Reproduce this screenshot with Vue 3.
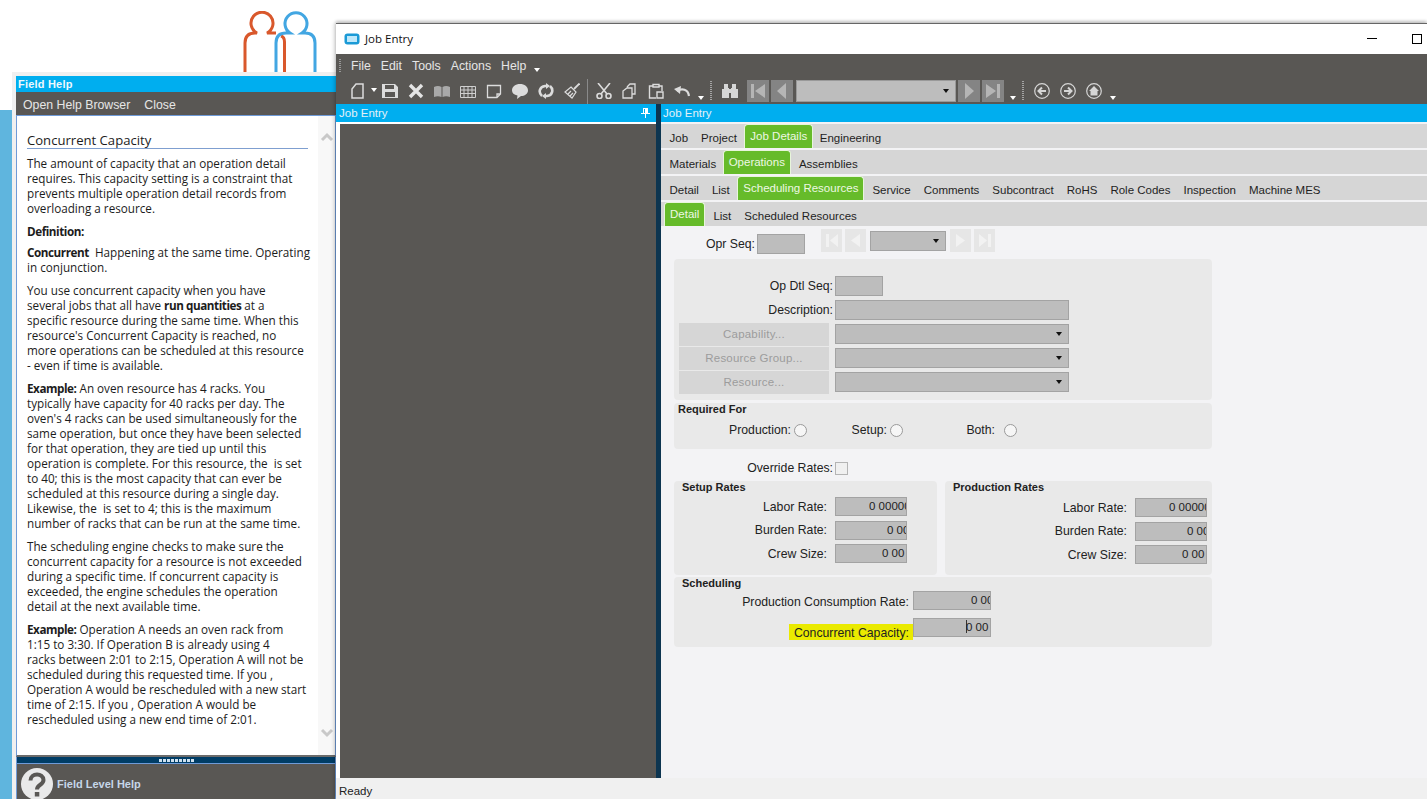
<script setup>
// tab rows, the active one is drawn green
const tabRows = [
  { id: 1, tabs: ['Job', 'Project', 'Job Details', 'Engineering'], active: 'Job Details' },
  { id: 2, tabs: ['Materials', 'Operations', 'Assemblies'], active: 'Operations' },
  { id: 3, tabs: ['Detail', 'List', 'Scheduling Resources', 'Service', 'Comments', 'Subcontract', 'RoHS', 'Role Codes', 'Inspection', 'Machine MES'], active: 'Scheduling Resources' },
  { id: 4, tabs: ['Detail', 'List', 'Scheduled Resources'], active: 'Detail' }
]

const menus = ['File', 'Edit', 'Tools', 'Actions', 'Help']
const lookups = ['Capability...', 'Resource Group...', 'Resource...']
const rates = [
  { label: 'Labor Rate:', value: '0 00000', cls: 'v-long' },
  { label: 'Burden Rate:', value: '0 00', cls: 'v-clip' },
  { label: 'Crew Size:', value: '0 00', cls: 'v-end' }
]
const radios = [
  { label: 'Production:', cls: 'r-prod' },
  { label: 'Setup:', cls: 'r-setup' },
  { label: 'Both:', cls: 'r-both' }
]
</script>

<template>
  <div class="desktop">
    <div class="strip"></div>

    <svg class="logo" width="80" height="70" viewBox="0 0 80 70" fill="none" stroke-width="3">
      <g stroke="#d9582c">
        <path d="M2 62V32Q2 22 12 22H14A11 11 0 1 1 24 22H33" />
        <path d="M38 25Q41.500 26 41.500 31V62" />
      </g>
      <g stroke="#42a6e2">
        <path d="M33 62V32Q33 22 43 22H47A11 11 0 1 1 59 22H62Q72 22 72 32V62" />
      </g>
    </svg>

    <!-- finestra field help -->
    <section class="help">
      <div class="help-title">Field Help</div>
      <div class="help-menu"><span>Open Help Browser</span><span>Close</span></div>
      <div class="help-content">
        <div class="help-text">
          <h4>Concurrent Capacity</h4>
          <p>The amount of capacity that an operation detail<br>requires. This capacity setting is a constraint that<br>prevents multiple operation detail records from<br>overloading a resource.</p>
          <p class="def"><b>Definition:</b></p>
          <p><b>Concurrent</b>&nbsp; Happening at the same time. Operating<br>in conjunction.</p>
          <p>You use concurrent capacity when you have<br>several jobs that all have <b>run quantities</b> at a<br>specific resource during the same time. When this<br>resource's Concurrent Capacity is reached, no<br>more operations can be scheduled at this resource<br>- even if time is available.</p>
          <p><b>Example:</b> An oven resource has 4 racks. You<br>typically have capacity for 40 racks per day. The<br>oven's 4 racks can be used simultaneously for the<br>same operation, but once they have been selected<br>for that operation, they are tied up until this<br>operation is complete. For this resource, the&nbsp; is set<br>to 40; this is the most capacity that can ever be<br>scheduled at this resource during a single day.<br>Likewise, the&nbsp; is set to 4; this is the maximum<br>number of racks that can be run at the same time.</p>
          <p>The scheduling engine checks to make sure the<br>concurrent capacity for a resource is not exceeded<br>during a specific time. If concurrent capacity is<br>exceeded, the engine schedules the operation<br>detail at the next available time.</p>
          <p><b>Example:</b> Operation A needs an oven rack from<br>1:15 to 3:30. If Operation B is already using 4<br>racks between 2:01 to 2:15, Operation A will not be<br>scheduled during this requested time. If you ,<br>Operation A would be rescheduled with a new start<br>time of 2:15. If you , Operation A would be<br>rescheduled using a new end time of 2:01.</p>
        </div>
        <div class="help-scroll">
          <svg width="14" height="10" viewBox="0 0 14 10" fill="none" stroke="#c9c9c9" stroke-width="3"><path d="M2 8L7 3L12 8" /></svg>
          <svg width="14" height="10" viewBox="0 0 14 10" fill="none" stroke="#c9c9c9" stroke-width="3"><path d="M2 2L7 7L12 2" /></svg>
        </div>
      </div>
      <div class="help-split"><i v-for="n in 9" :key="n"></i></div>
      <div class="help-foot">
        <svg width="34" height="34" viewBox="0 0 34 34">
          <circle cx="17" cy="17" r="16" fill="#e9e9e9" />
          <path d="M10.500 13.500C10.500 5.500 23.500 5.500 23.500 13C23.500 18 17 17.500 17 22.500" fill="none" stroke="#595754" stroke-width="4" />
          <rect x="14.800" y="25" width="4.500" height="4.500" fill="#595754" />
        </svg>
        <span>Field Level Help</span>
      </div>
    </section>

    <!-- finestra principale -->
    <section class="job">
      <header class="job-title">
        <svg width="16" height="12" viewBox="0 0 16 12">
          <rect x="0.500" y="0.500" width="15" height="11" rx="3" fill="#1b9ad6" />
          <rect x="3" y="3" width="10" height="6" fill="#bfe8fa" />
        </svg>
        <span class="job-name">Job Entry</span>
        <span class="win-min"></span>
        <span class="win-max"></span>
      </header>

      <div class="bars">
        <nav class="menu-bar">
          <span class="grip"></span>
          <span v-for="m in menus" :key="m" class="menu-item">{{ m }}</span>
          <span class="tri menu-tri"></span>
        </nav>
        <div class="tool-bar">
          <div class="tools first-tools">
            <svg class="ic" viewBox="0 0 16 16" fill="none" stroke="#dcdcdc" stroke-width="1.500"><path d="M2 6L6 1H13V15H2Z" /></svg>
            <span class="tri new-tri"></span>
            <svg class="ic" viewBox="0 0 16 16" fill="#dcdcdc"><path d="M0 1H13L16 4V15H0ZM3 2V6H12V2ZM3 9V14H13V9Z" /></svg>
            <svg class="ic" viewBox="0 0 16 16" fill="none" stroke="#e4e4e4" stroke-width="3.400"><path d="M2 2L14 14M14 2L2 14" /></svg>
            <svg class="ic" viewBox="0 0 16 16" fill="#a9a9a9"><path d="M0 4Q4 2 7.500 4V14Q4 12.500 0 14ZM8.500 4Q12 2 16 4V14Q12 12.500 8.500 14Z" /></svg>
            <svg class="ic" viewBox="0 0 16 16" fill="none" stroke="#cfcfcf"><path d="M.500 3.500H15.500V14.500H.500ZM.500 7H15.500M.500 10.500H15.500M4 3.500V14.500M8 3.500V14.500M12 3.500V14.500" /></svg>
            <svg class="ic" viewBox="0 0 16 16" fill="none" stroke="#dcdcdc" stroke-width="1.300"><path d="M1.500 2.500H14.500V11L11 14.500H1.500ZM14 11H11V14" /></svg>
            <svg class="ic" viewBox="0 0 16 16" fill="#dcdcdc"><path d="M8 1C12.500 1 16 3.500 16 7.500C16 11 12.500 13 9 13L5 16L5.500 12.500C2 12 0 10 0 7.500C0 3.500 3.500 1 8 1Z" /></svg>
            <svg class="ic" viewBox="0 0 16 16" fill="none" stroke="#dcdcdc" stroke-width="2.600"><path d="M4 13C0 9.500 1.500 3.500 7 3H9M12 3C16 6.500 14.500 12.500 9 13H7" /><path d="M8 0V6L12 3ZM8 10V16L4 13Z" fill="#dcdcdc" stroke="none" /></svg>
            <svg class="ic" viewBox="0 0 16 16" fill="none" stroke="#dcdcdc" stroke-width="1.200"><path d="M10 6L15.500 .500" stroke-width="1.800" /><path d="M7 4L12 9L8 15L1 9Z" /><path d="M4 11L7 8M6 13L9 10" /></svg>
            <span class="sep"></span>
            <svg class="ic" viewBox="0 0 16 16" fill="none" stroke="#dcdcdc" stroke-width="1.600"><path d="M2 0L11 11M14 0L5 11" /><circle cx="3.500" cy="13" r="2.500" /><circle cx="12.500" cy="13" r="2.500" /></svg>
            <svg class="ic" viewBox="0 0 16 16" fill="none" stroke="#dcdcdc" stroke-width="1.300"><path d="M5 4L8 1H13V11H10M1 8L5 5H10V15H1Z" /></svg>
            <svg class="ic" viewBox="0 0 16 16" fill="none" stroke="#dcdcdc" stroke-width="1.400"><path d="M5 3H1.500V15H8M11 3H14V8M5 4V1.500H11V4ZM9 9H15V15H9Z" /></svg>
            <svg class="ic" viewBox="0 0 16 16" fill="none" stroke="#dcdcdc" stroke-width="2.200"><path d="M15 13C14 6 8 5 3 8" /><path d="M0 6L7 3L6 11Z" fill="#dcdcdc" stroke="none" /></svg>
            <span class="tri undo-tri"></span>
            <span class="grip-v"></span>
            <svg class="ic" viewBox="0 0 16 16" fill="#d6d6d6"><path d="M2 1H6V5H7V15H0V6H2ZM10 1H14V6H16V15H9V5H10ZM7 6H9V10H7Z" /></svg>
          </div>

          <div class="rec-nav">
            <span class="nav-btn"><svg width="14" height="16" viewBox="0 0 14 16" fill="#b5b5b5"><path d="M0 1H3V15H0ZM14 1V15L4 8Z" /></svg></span>
            <span class="nav-btn"><svg width="10" height="16" viewBox="0 0 10 16" fill="#b5b5b5"><path d="M9 0V16L0 8Z" /></svg></span>
            <span class="nav-combo"><span class="tri dark"></span></span>
            <span class="nav-btn"><svg width="10" height="16" viewBox="0 0 10 16" fill="#b5b5b5"><path d="M1 0V16L10 8Z" /></svg></span>
            <span class="nav-btn"><svg width="14" height="16" viewBox="0 0 14 16" fill="#b5b5b5"><path d="M14 1H11V15H14ZM0 1V15L10 8Z" /></svg></span>
          </div>
          <span class="tri nav-tri"></span>
          <span class="grip-v nav-grip"></span>

          <div class="arrows">
            <svg class="ic" viewBox="0 0 16 16" fill="none" stroke="#d6d6d6" stroke-width="1.200"><circle cx="8" cy="8" r="7.300" /><path d="M12 8H5M8 4.500L4.500 8L8 11.500" stroke-width="2" /></svg>
            <svg class="ic" viewBox="0 0 16 16" fill="none" stroke="#d6d6d6" stroke-width="1.200"><circle cx="8" cy="8" r="7.300" /><path d="M4 8H11M8 4.500L11.500 8L8 11.500" stroke-width="2" /></svg>
            <svg class="ic" viewBox="0 0 16 16" fill="none" stroke="#d6d6d6" stroke-width="1.200"><circle cx="8" cy="8" r="7.300" /><path d="M8 3L13 8H11.500V12.500H4.500V8H3Z" fill="#d6d6d6" stroke="none" /></svg>
          </div>
          <span class="tri end-tri"></span>
        </div>
      </div>

      <div class="job-main">
        <div class="dock-left">
          <div class="dock-head">
            <span>Job Entry</span>
            <svg width="9" height="10" viewBox="0 0 9 10" fill="#fff"><path d="M2 0H7V5H9V6H5V10H4V6H0V5H2ZM3 1V5H4V1Z" /></svg>
          </div>
          <div class="dock-body"></div>
        </div>
        <div class="dock-split"></div>

        <div class="dock-right">
          <div class="dock-head"><span>Job Entry</span></div>
          <div class="tab-rows">
            <div v-for="row in tabRows" :key="row.id" class="tab-row" :class="'tab-row-' + row.id">
              <span v-for="t in row.tabs" :key="t" class="tab" :class="{ on: t === row.active }">{{ t }}</span>
            </div>
          </div>

          <div class="form">
            <div class="opr-row">
              <label class="lbl">Opr Seq:</label>
              <span class="fld opr-fld"></span>
              <div class="opr-nav">
                <span class="mini"><svg width="12" height="13" viewBox="0 0 12 13" fill="#f2f2f2"><path d="M0 0H3V13H0ZM12 0V13L4 6.500Z" /></svg></span>
                <span class="mini"><svg width="9" height="13" viewBox="0 0 9 13" fill="#f2f2f2"><path d="M9 0V13L0 6.500Z" /></svg></span>
                <span class="fld combo opr-combo"><span class="tri dark"></span></span>
                <span class="mini"><svg width="9" height="13" viewBox="0 0 9 13" fill="#f2f2f2"><path d="M0 0V13L9 6.500Z" /></svg></span>
                <span class="mini"><svg width="12" height="13" viewBox="0 0 12 13" fill="#f2f2f2"><path d="M12 0H9V13H12ZM0 0V13L8 6.500Z" /></svg></span>
              </div>
            </div>

            <div class="panel detail-panel">
              <label class="lbl end">Op Dtl Seq:</label>
              <span class="fld short"></span>
              <label class="lbl end">Description:</label>
              <span class="fld"></span>
              <template v-for="l in lookups" :key="l">
                <span class="lookup">{{ l }}</span>
                <span class="fld combo"><span class="tri dark"></span></span>
              </template>
            </div>

            <div class="panel req-panel">
              <h5>Required For</h5>
              <div class="radio-row">
                <div v-for="r in radios" :key="r.label" class="radio-field" :class="r.cls">
                  <label class="lbl">{{ r.label }}</label><i class="radio"></i>
                </div>
              </div>
            </div>

            <div class="override">
              <label class="lbl">Override Rates:</label><i class="check"></i>
            </div>

            <div class="rate-panels">
              <div class="panel rates setup">
                <h5>Setup Rates</h5>
                <div v-for="r in rates" :key="r.label" class="rate-row">
                  <label class="lbl">{{ r.label }}</label>
                  <span class="fld val" :class="r.cls">{{ r.value }}</span>
                </div>
              </div>
              <div class="panel rates prod">
                <h5>Production Rates</h5>
                <div v-for="r in rates" :key="r.label" class="rate-row">
                  <label class="lbl">{{ r.label }}</label>
                  <span class="fld val" :class="r.cls">{{ r.value }}</span>
                </div>
              </div>
            </div>

            <div class="panel sched">
              <h5>Scheduling</h5>
              <div class="sched-row">
                <label class="lbl">Production Consumption Rate:</label>
                <span class="fld val v-sched">0 00</span>
              </div>
              <div class="sched-row second">
                <label class="lbl hilite">Concurrent Capacity:</label>
                <span class="fld val v-cur"><i class="caret"></i>0 00</span>
              </div>
            </div>
          </div>
        </div>
      </div>

      <footer class="status">Ready</footer>
    </section>
  </div>
</template>

<style scoped>
.desktop {
  position: relative;
  width: 1427px;
  height: 799px;
  overflow: hidden;
  background: #fff;
  font-family: "Liberation Sans", Arial, sans-serif;
  font-size: 12px;
  color: #222;
}

.strip {
  position: absolute;
  left: 0;
  top: 110px;
  width: 16px;
  bottom: 0;
  background: #5fb5de;
}

.logo {
  position: absolute;
  left: 243px;
  top: 11px;
}

/* ---- field help ---- */
.help {
  position: absolute;
  left: 12px;
  top: 72px;
  width: 324px;
  height: 727px;
  box-sizing: border-box;
  padding: 4px 0 0 4px;
  background: #f0f0f0;
  display: flex;
  flex-direction: column;
}

.help-title {
  flex: none;
  height: 16px;
  line-height: 17px;
  padding-left: 2px;
  background: #00aeef;
  color: #eef8fd;
  font-size: 11px;
  font-weight: bold;
  letter-spacing: .2px;
}

.help-menu {
  flex: none;
  height: 23px;
  line-height: 26px;
  padding-left: 7px;
  background: #595754;
  color: #e6e6e6;
  display: flex;
  gap: 14px;
  font-size: 12.300px;
}

.help-content {
  flex: 1;
  min-height: 0;
  display: flex;
  background: #fff;
  border: 1px solid #6f9bd8;
  border-bottom: 2px solid #6b6b6b;
}

.help-text {
  flex: 1;
  overflow: hidden;
  padding: 15px 0 0 10px;
  font-family: "Open Sans", "Noto Sans", sans-serif;
  font-size: 11.700px;
  line-height: 15px;
  color: #1c1c1c;
  white-space: nowrap;
}

.help-text b {
  letter-spacing: -.45px;
}

.help-text h4 {
  margin: 0 10px 7px 0;
  padding-bottom: 1px;
  height: 16px;
  font-size: 13.100px;
  line-height: 18px;
  font-weight: normal;
  border-bottom: 1px solid #7f9fd0;
}

.help-text p {
  margin: 0 0 8px;
}

.help-text p.def {
  margin-bottom: 6px;
}

.help-scroll {
  flex: none;
  width: 17px;
  background: #f8f8f8;
  display: flex;
  flex-direction: column;
  justify-content: space-between;
  align-items: center;
  padding: 16px 0 17px;
  box-sizing: border-box;
}

.help-split {
  flex: none;
  height: 6px;
  background: #003d66;
  border-right: 1px solid #6f9bd8;
  border-left: 1px solid #6f9bd8;
  display: flex;
  justify-content: center;
  align-items: center;
  gap: 1px;
}

.help-split i {
  width: 3px;
  height: 3px;
  background: #cfe0ee;
}

.help-foot {
  flex: none;
  height: 36px;
  box-sizing: border-box;
  display: flex;
  align-items: center;
  gap: 3px;
  padding: 4px 0 0 3px;
  background: #595754;
  border: 1px solid #6f9bd8;
  border-bottom: 0;
  color: #c6d6e8;
  font-size: 11px;
  font-weight: bold;
}

.help-foot svg {
  flex: none;
}

/* ---- job entry ---- */
.job {
  position: absolute;
  left: 336px;
  top: 23px;
  right: 0;
  bottom: 0;
  display: flex;
  flex-direction: column;
  background: #fff;
  border-top: 1px solid #666;
  box-shadow: 0 -2px 3px rgba(0, 0, 0, .2), -2px 0 4px rgba(0, 0, 0, .15);
}

.job-title {
  height: 30px;
  box-sizing: border-box;
  padding-bottom: 1px;
  flex: none;
  display: flex;
  align-items: center;
  padding-left: 8px;
}

.job-name {
  margin-left: 5px;
  font-family: "Open Sans", sans-serif;
  font-size: 11.500px;
  color: #111;
}

.win-min {
  margin-left: auto;
  width: 10px;
  height: 1px;
  background: #000;
}

.win-max {
  margin: 0 5px 0 35px;
  width: 8px;
  height: 8px;
  border: 1px solid #000;
}

.bars {
  flex: none;
  height: 50px;
  background: #595754;
  color: #e6e6e6;
}

.menu-bar {
  height: 24px;
  display: flex;
  align-items: center;
  padding-left: 3px;
  font-size: 12.300px;
}

.grip {
  width: 2px;
  height: 14px;
  margin-right: 10px;
  background: repeating-linear-gradient(#999 0 1px, transparent 1px 2px);
}

.menu-item {
  margin-right: 10px;
}

.menu-tri {
  align-self: flex-end;
  margin: 0 0 6px -2px;
}

.tri {
  display: inline-block;
  width: 0;
  height: 0;
  border-left: 3.500px solid transparent;
  border-right: 3.500px solid transparent;
  border-top: 4px solid #fff;
}

.tri.dark {
  border-top-color: #111;
}

.tool-bar {
  height: 26px;
  display: flex;
  align-items: center;
  padding-left: 14px;
}

.tools {
  display: flex;
  align-items: center;
  gap: 10px;
}

.ic {
  width: 16px;
  height: 16px;
  flex: none;
}

.new-tri {
  margin: 0 -5px 0 -5px;
  position: relative;
  top: -1px;
}

.sep {
  width: 1px;
  height: 25px;
  margin: 0 -2px 0 -3px;
  background: #8a8a8a;
}

.undo-tri {
  align-self: flex-end;
  margin: 0 -4px 4px -2px;
}

.grip-v {
  width: 2px;
  height: 20px;
  background: repeating-linear-gradient(#a5a5a5 0 1px, transparent 1px 2px);
}

.rec-nav {
  display: flex;
  align-items: center;
  gap: 2px;
  margin-left: 9px;
}

.nav-btn {
  width: 22px;
  height: 22px;
  background: #848484;
  display: flex;
  align-items: center;
  justify-content: center;
}

.nav-combo {
  width: 160px;
  height: 22px;
  box-sizing: border-box;
  margin: 0 0 0 1px;
  background: #bdbdbd;
  border: 1px solid #999;
  display: flex;
  align-items: center;
  justify-content: flex-end;
  padding-right: 6px;
}

.nav-tri {
  align-self: flex-end;
  margin: 0 0 4px 6px;
}

.nav-grip {
  margin-left: 6px;
}

.arrows {
  display: flex;
  gap: 10px;
  margin-left: 10px;
}

.end-tri {
  align-self: flex-end;
  margin: 0 0 4px 8px;
}

.job-main {
  flex: 1;
  min-height: 0;
  display: flex;
}

.dock-left {
  width: 320px;
  display: flex;
  flex-direction: column;
}

.dock-head {
  flex: none;
  height: 18px;
  line-height: 19px;
  background: #00aeef;
  color: #e3f1f8;
  font-size: 11.500px;
  padding-left: 3px;
  display: flex;
  align-items: center;
  justify-content: space-between;
}

.dock-head svg {
  margin-right: 6px;
}

.dock-body {
  flex: 1;
  margin: 2px 0 0 4px;
  background: #595754;
}

.dock-split {
  width: 5px;
  background: #0d3550;
}

.dock-right {
  flex: 1;
  display: flex;
  flex-direction: column;
  background: #f3f3f5;
}

.dock-right .dock-head {
  padding-left: 2px;
}

.tab-rows {
  display: flex;
  flex-direction: column;
  gap: 2px;
  padding-top: 2px;
}

.tab-row {
  height: 24px;
  display: flex;
  align-items: stretch;
  padding-left: 2px;
  background: #d6d6d6;
  color: #1f1f1f;
  font-size: 11.500px;
}

.tab {
  padding: 2px 6.500px 0;
  line-height: 24px;
}

.tab.on {
  margin: 0 1px;
  padding: 0 5px;
  line-height: 22px;
  color: #eef8e4;
  background: #66bb2a;
  border: 1px solid #e8f5dc;
  border-bottom: 0;
  border-radius: 4px 4px 0 0;
}

.tab-row-1 .tab.on {
  margin-right: 0;
}

.tab-row-2 .tab.on {
  margin-left: 0;
  margin-right: 1.500px;
}

.tab-row-3 .tab.on {
  margin-right: 1.500px;
}

.tab-row-4 {
  padding-left: 0;
}

.tab-row-4 .tab.on {
  margin: 0 1.500px 0 3px;
}

.form {
  padding-left: 13px;
  width: 538px;
  font-size: 12.250px;
}

.lbl {
  white-space: nowrap;
  color: #222;
}

.opr-row {
  height: 23px;
  margin-top: 3px;
  display: flex;
  align-items: flex-start;
}

.opr-row .lbl {
  margin: 8px 2px 0 32px;
}

.fld {
  display: block;
  box-sizing: border-box;
  height: 20px;
  background: #bdbdbd;
  border: 1px solid #a3a3a3;
}

.opr-fld {
  width: 48px;
  margin-top: 5px;
}

.opr-nav {
  display: flex;
  align-items: center;
  gap: 3px;
  margin-left: 16px;
}

.mini {
  width: 21px;
  height: 23px;
  background: #e6e6e6;
  display: flex;
  align-items: center;
  justify-content: center;
}

.opr-combo {
  width: 76px;
  margin: 0 1px;
}

.combo {
  display: flex;
  align-items: center;
  justify-content: flex-end;
  padding-right: 6px;
}

.panel {
  background: #e9e9e9;
  border-radius: 4px;
}

.panel h5 {
  margin: 0;
  font-size: 11px;
  line-height: 13px;
  font-weight: bold;
  color: #222;
}

.detail-panel {
  margin-top: 7px;
  height: 141px;
  box-sizing: border-box;
  padding: 17px 0 0 5px;
  display: grid;
  grid-template-columns: 150px 234px;
  grid-auto-rows: 20px;
  gap: 4px 6px;
}

.end {
  justify-self: end;
  margin-right: -4px;
  line-height: 21px;
}

.short {
  width: 48px;
}

.lookup {
  margin: -1px 0 -2px;
  background: #d6d6d6;
  color: #9c9c9c;
  font-size: 11.500px;
  letter-spacing: .2px;
  line-height: 23px;
  text-align: center;
}

.req-panel {
  margin-top: 3px;
  height: 46px;
  box-sizing: border-box;
  padding: 0 0 0 4px;
}

.req-panel h5 {
  line-height: 13px;
}

.radio-row {
  display: flex;
  margin: 7px 0 0 -4px;
}

.radio-field {
  display: flex;
  justify-content: flex-end;
  align-items: center;
  gap: 3px;
}

.r-prod {
  width: 133px;
}

.r-setup {
  width: 96px;
}

.r-both {
  width: 114px;
  gap: 9px;
}

.radio {
  width: 11px;
  height: 11px;
  border: 1px solid #9a9a9a;
  border-radius: 50%;
  background: #f6f6f6;
}

.override {
  margin-top: 12px;
  width: 174px;
  height: 14px;
  display: flex;
  justify-content: flex-end;
  align-items: center;
  gap: 2px;
}

.check {
  width: 11px;
  height: 11px;
  border: 1px solid #b4b4b4;
  background: #f0f0f0;
}

.rate-panels {
  display: flex;
  gap: 8px;
  margin-top: 6px;
}

.rates {
  height: 94px;
  box-sizing: border-box;
  padding-right: 5px;
}

.rates h5 {
  padding: 0 0 3px 8px;
}

.setup {
  width: 263px;
  padding-right: 30px;
}

.prod {
  width: 267px;
}

.prod .rate-row:first-of-type {
  margin-top: 1px;
}

.rate-row {
  display: flex;
  justify-content: flex-end;
  align-items: center;
  gap: 8px;
  height: 19px;
  margin-bottom: 4.500px;
}

.rate-row .fld {
  height: 19px;
}

.val {
  width: 72px;
  overflow: hidden;
  white-space: nowrap;
  font-size: 11.500px;
  line-height: 17px;
  color: #222;
}

.v-long {
  padding-left: 33px;
}

.v-clip {
  padding-left: 51px;
}

.v-end {
  padding-left: 46px;
}

.sched {
  margin-top: 2px;
  height: 70px;
  box-sizing: border-box;
}

.sched h5 {
  padding-left: 8px;
  height: 14px;
}

.sched-row {
  display: flex;
  gap: 4px;
  align-items: center;
  width: 317px;
  justify-content: flex-end;
}

.sched-row .lbl {
  padding-top: 2px;
}

.sched-row .fld {
  width: 78px;
  height: 19px;
}

.second {
  margin-top: 8px;
  gap: 0;
}

.sched-row .hilite {
  align-self: flex-end;
  margin-bottom: -3px;
  width: 124px;
  box-sizing: border-box;
  height: 16px;
  padding: 0 4px 0 0;
  line-height: 18px;
  text-align: right;
  background: #eaea00;
}

.v-sched {
  padding-left: 57px;
}

.v-cur {
  padding-left: 52px;
}

.caret {
  display: inline-block;
  width: 1px;
  height: 13px;
  margin-right: -1px;
  vertical-align: -2px;
  background: #333;
}

.status {
  flex: none;
  height: 21px;
  line-height: 26px;
  padding-left: 3px;
  background: #f0f0f0;
  font-size: 11.500px;
  color: #222;
}
</style>
